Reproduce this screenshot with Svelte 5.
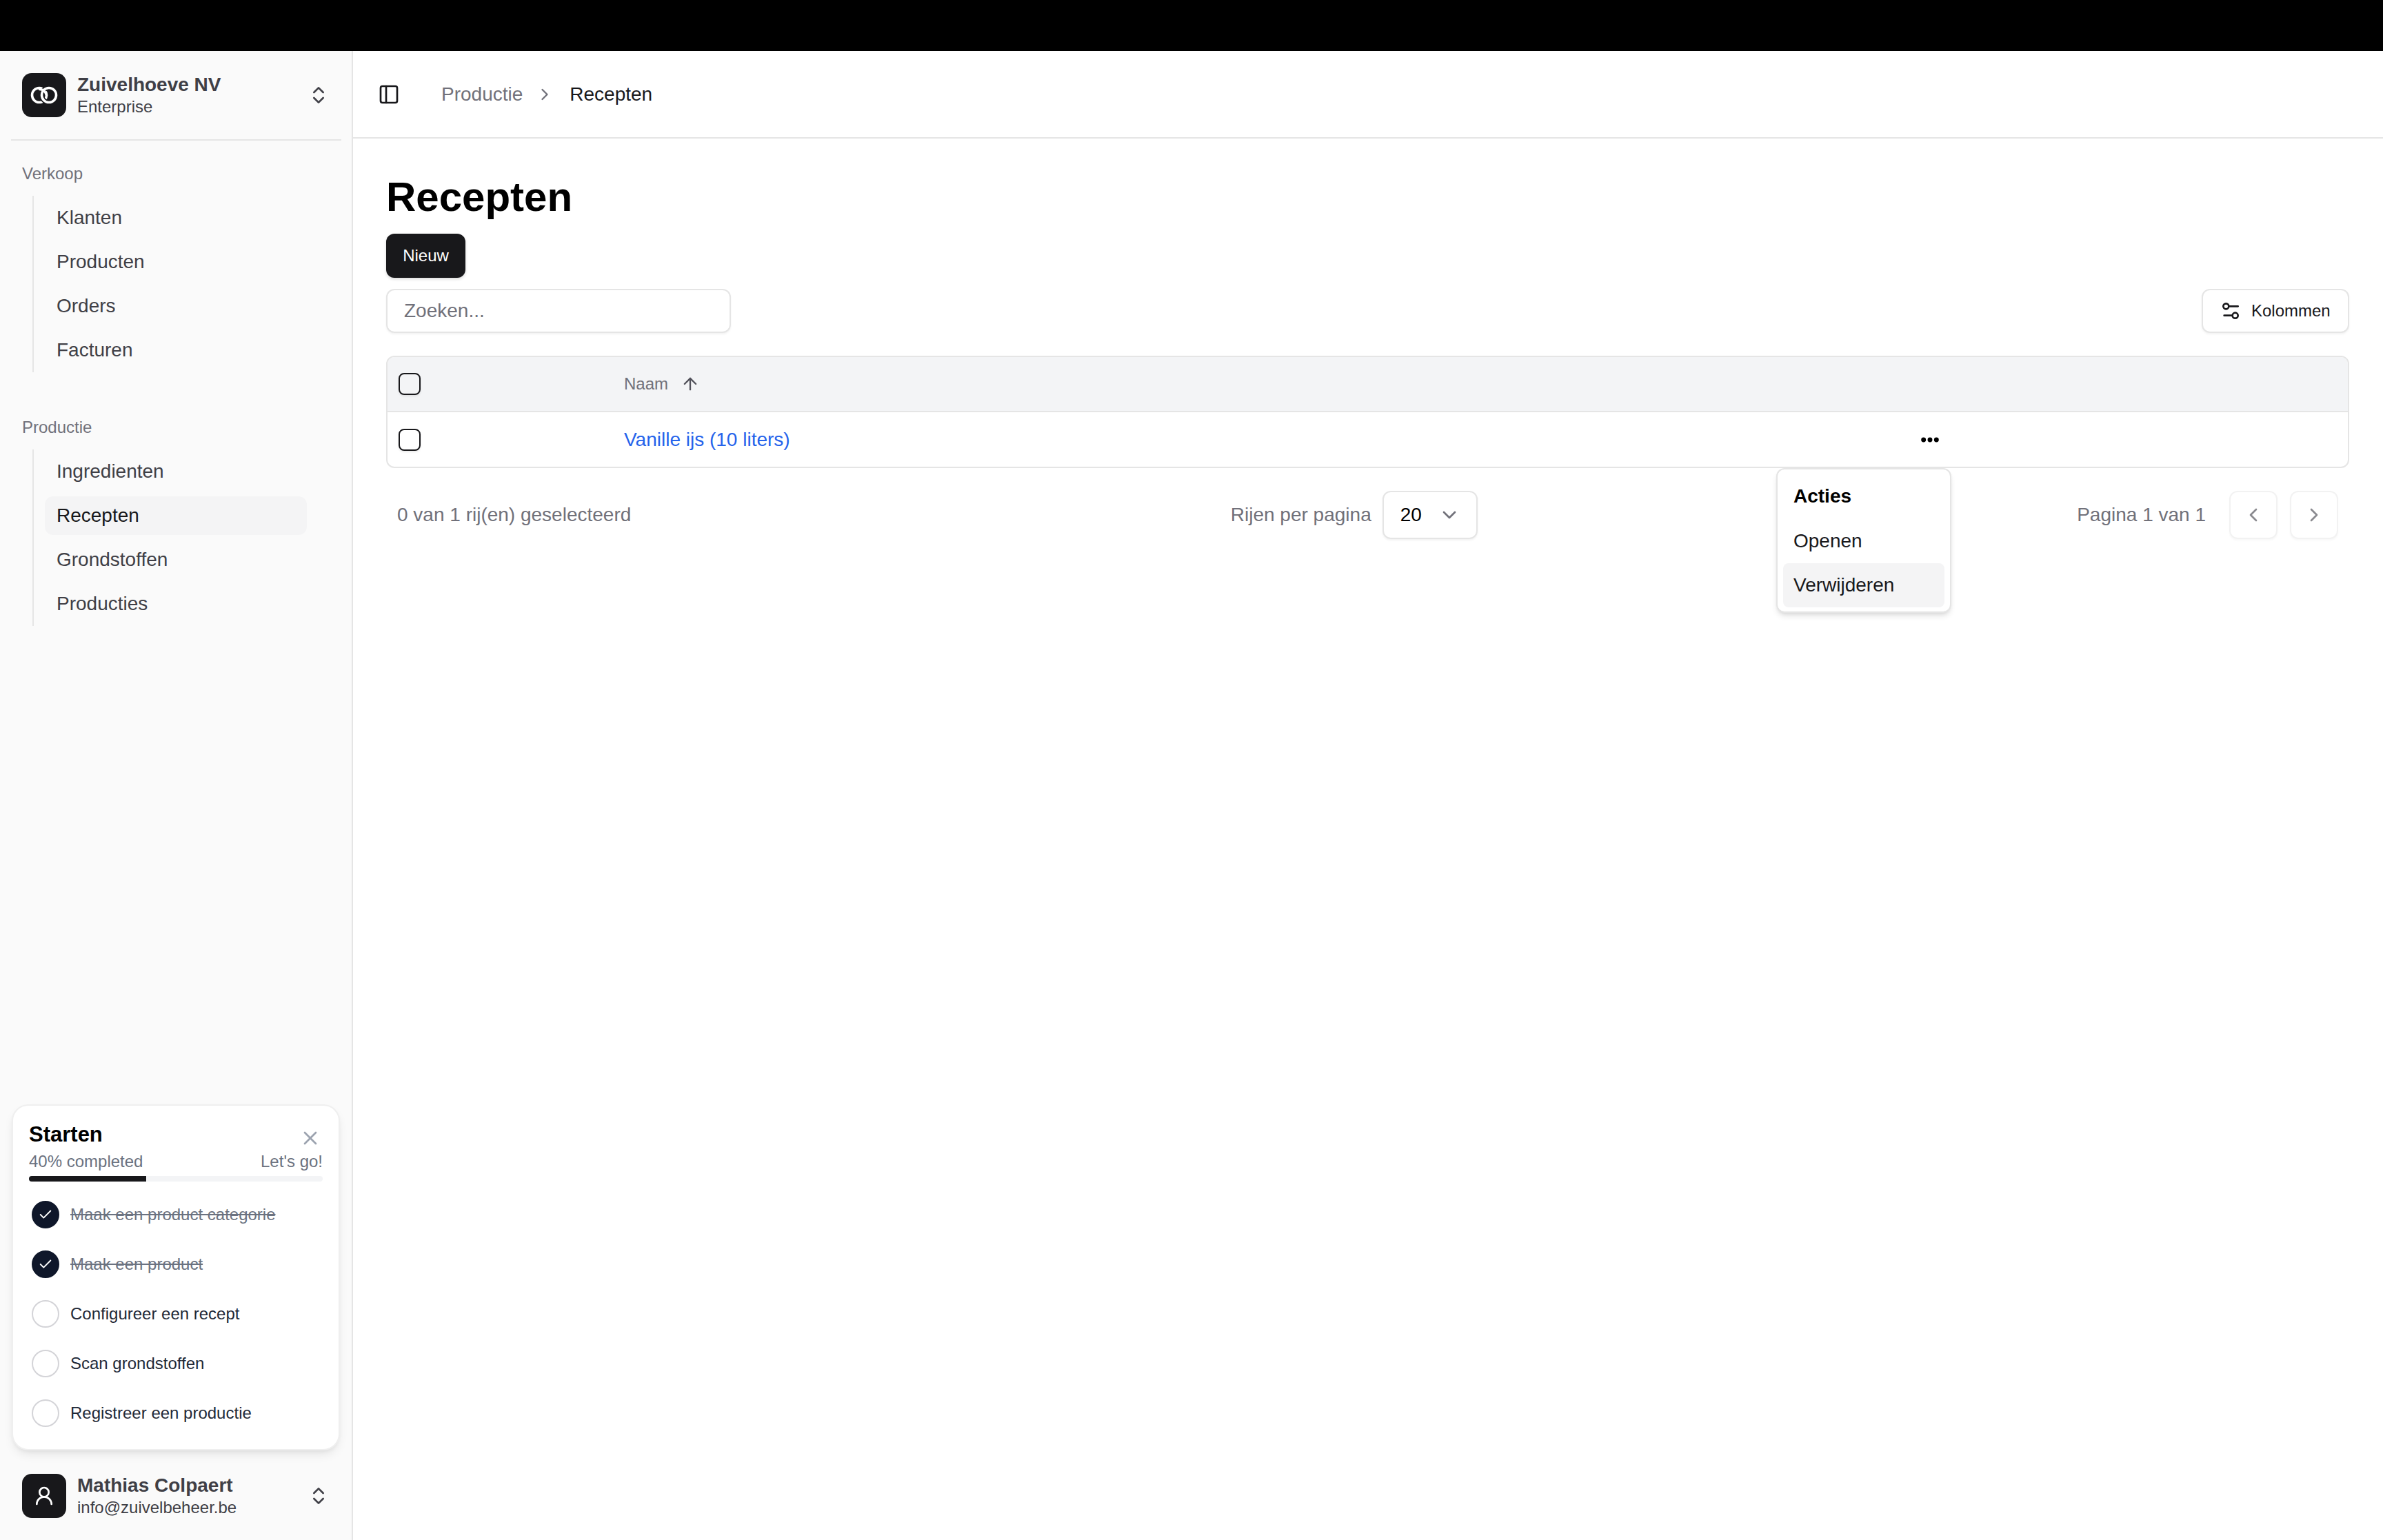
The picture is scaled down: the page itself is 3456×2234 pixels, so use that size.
<script>
  const groups = [
    { label: 'Verkoop', items: ['Klanten', 'Producten', 'Orders', 'Facturen'] },
    { label: 'Productie', items: ['Ingredienten', 'Recepten', 'Grondstoffen', 'Producties'] }
  ];
  const steps = [
    { text: 'Maak een product categorie', done: true },
    { text: 'Maak een product', done: true },
    { text: 'Configureer een recept', done: false },
    { text: 'Scan grondstoffen', done: false },
    { text: 'Registreer een productie', done: false }
  ];
</script>

{#snippet updown()}
  <svg class="updown" width="32" height="32" viewBox="0 0 24 24"><path d="m7 15 5 5 5-5" /><path d="m7 9 5-5 5 5" /></svg>
{/snippet}

<div class="shell">
  <div class="topbar"></div>
  <div class="body">
    <aside class="sidebar">
      <div class="brand">
        <div class="tile">
          <svg width="42" height="28" viewBox="0 0 42 28" fill="none">
            <circle cx="14" cy="14" r="10.5" stroke="#fff" stroke-width="3.6" />
            <circle cx="28" cy="14" r="10.5" stroke="#18181b" stroke-width="7" stroke-dasharray="33 33" stroke-dashoffset="-16.5" />
            <circle cx="28" cy="14" r="10.5" stroke="#fff" stroke-width="3.6" />
            <path d="M14.5 5.5 A10.5 10.5 0 0 1 24.5 14" stroke="#fff" stroke-width="3.6" />
          </svg>
        </div>
        <div class="who">
          <div class="who-name">Zuivelhoeve NV</div>
          <div class="who-sub">Enterprise</div>
        </div>
        {@render updown()}
      </div>
      <div class="sep"></div>
      <nav class="nav">
        {#each groups as g}
          <div class="group">
            <div class="group-label">{g.label}</div>
            <ul class="menu">
              {#each g.items as item}
                <li class="menu-item" class:active={item === 'Recepten'}>{item}</li>
              {/each}
            </ul>
          </div>
        {/each}
      </nav>

      <div class="card">
        <div class="card-head">
          <div class="card-title">Starten</div>
          <svg class="close" width="32" height="32" viewBox="0 0 24 24"><path d="M18 6 6 18" /><path d="m6 6 12 12" /></svg>
        </div>
        <div class="progress-text"><span>40% completed</span><span>Let's go!</span></div>
        <div class="bar"><div class="fill" style="width: 40%"></div></div>
        <div class="steps">
          {#each steps as s}
            <div class="step">
              <span class="dot" class:done={s.done}>
                {#if s.done}
                  <svg width="22" height="22" viewBox="0 0 24 24"><path d="M20 6 9 17l-5-5" /></svg>
                {/if}
              </span>
              <span class="step-text" class:struck={s.done}>{s.text}</span>
            </div>
          {/each}
        </div>
      </div>

      <div class="brand user">
        <div class="tile">
          <svg class="usericon" width="32" height="32" viewBox="0 0 24 24"><circle cx="12" cy="8" r="5" /><path d="M20 21a8 8 0 0 0-16 0" /></svg>
        </div>
        <div class="who">
          <div class="who-name">Mathias Colpaert</div>
          <div class="who-sub">info@zuivelbeheer.be</div>
        </div>
        {@render updown()}
      </div>
    </aside>

    <main class="main">
      <header class="header">
        <svg class="panel" width="32" height="32" viewBox="0 0 24 24"><rect x="3" y="3" width="18" height="18" rx="2" /><path d="M9 3v18" /></svg>
        <span class="crumb">Productie</span>
        <svg class="crumb-sep" width="28" height="28" viewBox="0 0 24 24"><path d="m9 18 6-6-6-6" /></svg>
        <span class="crumb current">Recepten</span>
      </header>

      <div class="content">
        <h1 class="title">Recepten</h1>
        <button class="new">Nieuw</button>
        <div class="toolbar">
          <div class="search">Zoeken...</div>
          <button class="columns">
            <svg width="32" height="32" viewBox="0 0 24 24"><path d="M20 7h-9" /><path d="M14 17H5" /><circle cx="17" cy="17" r="3" /><circle cx="7" cy="7" r="3" /></svg>
            Kolommen
          </button>
        </div>

        <div class="table">
          <div class="row head">
            <span class="check"></span>
            <span class="naam">Naam
              <svg width="28" height="28" viewBox="0 0 24 24"><path d="m5 12 7-7 7 7" /><path d="M12 19V5" /></svg>
            </span>
          </div>
          <div class="row">
            <span class="check"></span>
            <a class="link" href="#recept">Vanille ijs (10 liters)</a>
            <svg class="more" width="32" height="32" viewBox="0 0 24 24"><circle cx="12" cy="12" r="1.6" /><circle cx="19" cy="12" r="1.6" /><circle cx="5" cy="12" r="1.6" /></svg>
          </div>
        </div>

        <div class="footer">
          <span class="muted">0 van 1 rij(en) geselecteerd</span>
          <div class="per-page">
            <span class="muted">Rijen per pagina</span>
            <div class="select">
              <span>20</span>
              <svg width="32" height="32" viewBox="0 0 24 24"><path d="m6 9 6 6 6-6" /></svg>
            </div>
          </div>
          <div class="pager">
            <span class="muted">Pagina 1 van 1</span>
            <div class="pager-btns">
              <span class="page-btn"><svg width="32" height="32" viewBox="0 0 24 24"><path d="m15 18-6-6 6-6" /></svg></span>
              <span class="page-btn"><svg width="32" height="32" viewBox="0 0 24 24"><path d="m9 18 6-6-6-6" /></svg></span>
            </div>
          </div>
        </div>

        <div class="popup">
          <div class="pop-label">Acties</div>
          <div class="pop-item">Openen</div>
          <div class="pop-item hover">Verwijderen</div>
        </div>
      </div>
    </main>
  </div>
</div>

<style>
  :global(body) {
    margin: 0;
    background: #fff;
    font-family: "Liberation Sans", Arial, sans-serif;
  }
  svg {
    fill: none;
    stroke: currentColor;
    stroke-width: 2;
    stroke-linecap: round;
    stroke-linejoin: round;
    flex: none;
    display: block;
  }
  .shell {
    height: 2234px;
    display: flex;
    flex-direction: column;
    overflow: hidden;
  }
  .topbar {
    height: 74px;
    background: #000;
    flex: none;
  }
  .body {
    flex: 1;
    display: flex;
    min-height: 0;
  }
  .sidebar {
    width: 512px;
    box-sizing: border-box;
    flex: none;
    background: #fafafa;
    border-right: 2px solid #e5e5e5;
    display: flex;
    flex-direction: column;
  }
  .brand {
    display: flex;
    align-items: center;
    padding: 32px 32px 0;
    gap: 16px;
  }
  .tile {
    width: 64px;
    height: 64px;
    border-radius: 14px;
    background: #18181b;
    color: #fff;
    display: flex;
    align-items: center;
    justify-content: center;
    flex: none;
  }
  .who {
    flex: 1;
    min-width: 0;
    color: #3f3f46;
  }
  .who-name {
    font-size: 28px;
    line-height: 33px;
    font-weight: 700;
  }
  .who-sub {
    font-size: 24px;
    line-height: 31px;
  }
  .updown {
    color: #3f3f46;
  }
  .sep {
    height: 2px;
    margin: 32px 16px 0;
    width: 479px;
    background: #e5e5e5;
  }
  .nav {
    padding: 32px 0 0 32px;
  }
  .group + .group {
    margin-top: 64px;
  }
  .group-label {
    font-size: 24px;
    line-height: 32px;
    color: #71717a;
    margin-bottom: 16px;
  }
  .menu {
    list-style: none;
    margin: 0 0 0 15px;
    padding: 4px 0 4px 16px;
    border-left: 2px solid #e5e5e5;
    display: flex;
    flex-direction: column;
    gap: 8px;
    width: 380px;
  }
  .menu-item {
    height: 56px;
    line-height: 56px;
    padding-left: 17px;
    font-size: 28px;
    color: #3f3f46;
    border-radius: 12px;
  }
  .menu-item.active {
    background: #f4f4f5;
    color: #18181b;
  }
  .card {
    margin: auto 17px 0;
    width: 476px;
    box-sizing: border-box;
    background: #fff;
    border: 2px solid #efefef;
    border-radius: 24px;
    padding: 22px 23px 32px;
    box-shadow: 0 8px 16px -4px rgba(0, 0, 0, 0.1), 0 3px 6px -2px rgba(0, 0, 0, 0.06);
  }
  .card-head {
    display: flex;
    justify-content: space-between;
    align-items: flex-start;
  }
  .card-title {
    font-size: 31px;
    line-height: 40px;
    font-weight: 700;
    color: #000;
  }
  .close {
    color: #9ca3af;
    margin-top: 9px;
    margin-right: 2px;
  }
  .progress-text {
    display: flex;
    justify-content: space-between;
    margin-top: 4px;
    font-size: 24px;
    line-height: 28px;
    color: #6b7280;
  }
  .bar {
    height: 8px;
    margin-top: 7px;
    background: #f3f4f6;
    border-radius: 4px;
    overflow: hidden;
  }
  .fill {
    height: 100%;
    background: #18181b;
  }
  .steps {
    margin-top: 28px;
    display: flex;
    flex-direction: column;
    gap: 32px;
    padding-left: 4px;
  }
  .step {
    display: flex;
    align-items: center;
    gap: 16px;
    height: 40px;
  }
  .dot {
    width: 40px;
    height: 40px;
    box-sizing: border-box;
    border-radius: 50%;
    border: 2px solid #d4d4d8;
    display: flex;
    align-items: center;
    justify-content: center;
    flex: none;
  }
  .dot.done {
    background: #0f172a;
    border-color: #0f172a;
    color: #fff;
  }
  .step-text {
    font-size: 24px;
    color: #1f2937;
  }
  .step-text.struck {
    color: #6b7280;
    text-decoration: line-through;
  }
  .user {
    padding: 34px 32px 32px;
  }
  .main {
    flex: 1;
    min-width: 0;
    display: flex;
    flex-direction: column;
  }
  .header {
    height: 125px;
    box-sizing: content-box;
    border-bottom: 2px solid #e5e5e5;
    display: flex;
    align-items: center;
    padding-left: 36px;
  }
  .panel {
    color: #18181b;
    margin-right: 60px;
  }
  .crumb {
    font-size: 28px;
    color: #71717a;
  }
  .crumb.current {
    color: #18181b;
  }
  .crumb-sep {
    color: #71717a;
    margin: 0 22px 0 18px;
  }
  .content {
    position: relative;
    padding: 49px 49px 0 48px;
    display: flex;
    flex-direction: column;
    align-items: flex-start;
  }
  .title {
    margin: 0;
    font-size: 60px;
    line-height: 72px;
    font-weight: 700;
    color: #000;
  }
  .new {
    margin-top: 17px;
    width: 115px;
    height: 64px;
    border: 0;
    border-radius: 12px;
    background: #18181b;
    color: #fff;
    font: 24px "Liberation Sans", Arial, sans-serif;
    box-shadow: 0 2px 4px rgba(0, 0, 0, 0.15);
  }
  .toolbar {
    margin-top: 16px;
    width: 100%;
    display: flex;
    justify-content: space-between;
    align-items: center;
  }
  .search {
    width: 500px;
    height: 64px;
    box-sizing: border-box;
    border: 2px solid #e5e5e5;
    border-radius: 12px;
    padding-left: 24px;
    line-height: 60px;
    font-size: 28px;
    color: #71717a;
    background: #fff;
    box-shadow: 0 2px 3px rgba(0, 0, 0, 0.05);
  }
  .columns {
    height: 64px;
    width: 214px;
    box-sizing: border-box;
    border: 2px solid #e5e5e5;
    border-radius: 12px;
    background: #fff;
    color: #18181b;
    display: flex;
    align-items: center;
    gap: 14px;
    font: 24px "Liberation Sans", Arial, sans-serif;
    box-shadow: 0 2px 3px rgba(0, 0, 0, 0.05);
    padding: 0 0 0 24px;
  }
  .table {
    margin-top: 33px;
    width: 100%;
    box-sizing: border-box;
    border: 2px solid #e5e5e5;
    border-radius: 12px;
    overflow: hidden;
  }
  .row {
    height: 79px;
    display: grid;
    grid-template-columns: 327px 1852px 84px 1fr;
    align-items: center;
    padding-left: 16px;
  }
  .row.head {
    height: 78px;
    background: #f3f4f6;
    border-bottom: 2px solid #e5e5e5;
  }
  .check {
    width: 32px;
    height: 32px;
    box-sizing: border-box;
    border: 2px solid #18181b;
    border-radius: 8px;
    background: #fff;
    box-shadow: 0 2px 3px rgba(0, 0, 0, 0.08);
  }
  .head .check {
    background: transparent;
  }
  .naam {
    display: flex;
    align-items: center;
    gap: 18px;
    font-size: 24px;
    color: #71717a;
  }
  .naam svg {
    color: #52525b;
  }
  .link {
    font-size: 28px;
    color: #2563eb;
    text-decoration: none;
  }
  .more {
    justify-self: center;
    color: #000;
    fill: #000;
  }
  .footer {
    width: 100%;
    box-sizing: border-box;
    margin-top: 33px;
    padding: 0 16px;
    display: flex;
    justify-content: space-between;
    align-items: center;
    height: 70px;
  }
  .muted {
    font-size: 28px;
    color: #71717a;
  }
  .per-page {
    display: flex;
    align-items: center;
    gap: 16px;
  }
  .select {
    width: 138px;
    height: 70px;
    box-sizing: border-box;
    border: 2px solid #e5e5e5;
    border-radius: 12px;
    background: #fff;
    display: flex;
    align-items: center;
    justify-content: space-between;
    padding: 0 23px 0 24px;
    font-size: 28px;
    color: #000;
    box-shadow: 0 2px 3px rgba(0, 0, 0, 0.05);
  }
  .select svg {
    color: #71717a;
  }
  .pager {
    display: flex;
    align-items: center;
    gap: 34px;
  }
  .pager-btns {
    display: flex;
    gap: 18px;
  }
  .page-btn {
    width: 70px;
    height: 70px;
    box-sizing: border-box;
    border: 2px solid #f2f2f2;
    border-radius: 12px;
    display: flex;
    align-items: center;
    justify-content: center;
    color: #8a8a8f;
    box-shadow: 0 2px 3px rgba(0, 0, 0, 0.03);
  }
  .popup {
    position: absolute;
    left: 2064px;
    top: 478px;
    width: 254px;
    height: 210px;
    box-sizing: border-box;
    background: #fff;
    border: 2px solid #e5e5e5;
    border-radius: 12px;
    padding: 8px;
    box-shadow: 0 6px 10px -2px rgba(0, 0, 0, 0.12), 0 3px 5px -2px rgba(0, 0, 0, 0.08);
  }
  .pop-label,
  .pop-item {
    height: 64px;
    line-height: 64px;
    padding-left: 15px;
    font-size: 28px;
    color: #18181b;
    border-radius: 8px;
  }
  .pop-label {
    font-weight: 700;
    color: #000;
    line-height: 62px;
  }
  .pop-item.hover {
    background: #f4f4f5;
  }
</style>
